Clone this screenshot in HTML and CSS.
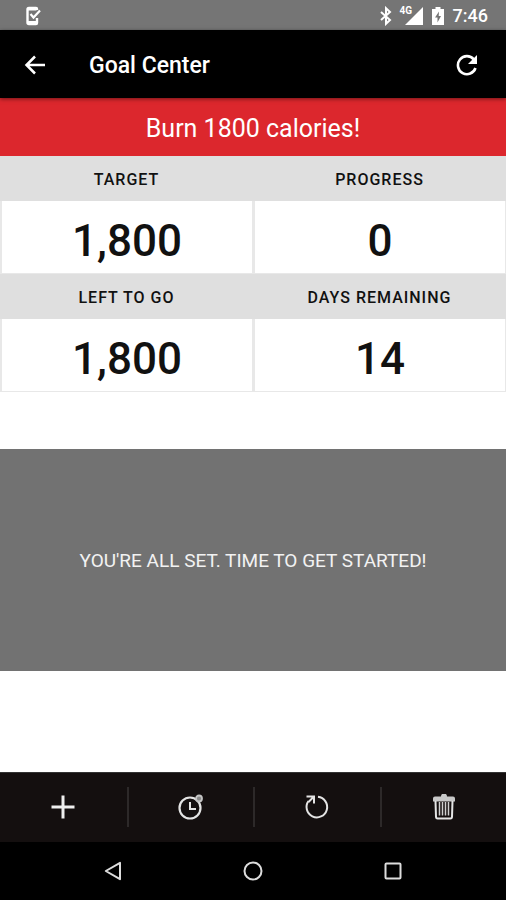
FILE: index.html
```html
<!DOCTYPE html>
<html lang="en">
<head>
<meta charset="utf-8">
<meta name="viewport" content="width=device-width, initial-scale=1">
<title>Goal Center</title>
<link rel="stylesheet" href="styles.css">
</head>
<body>
<div class="screen">
  <div class="status-bar">
    <svg class="status-app" width="16" height="20" viewBox="0 0 16 20" aria-hidden="true">
      <path d="M12 4V3a1 1 0 0 0-1-1H4a1.500 1.500 0 0 0-1.500 1.500v13A1.500 1.500 0 0 0 4 18h7a1 1 0 0 0 1-1v-5" fill="none" stroke="#fff" stroke-width="2.400"/>
      <path d="M2.500 3h9M2.500 16.500h9.500" stroke="#fff" stroke-width="3"/>
      <path d="M5.500 8l3 3.500L15 4.500" fill="none" stroke="#fff" stroke-width="2.200"/>
    </svg>
    <div class="status-info">
      <svg width="12" height="20" viewBox="0 0 12 20" aria-hidden="true">
        <path d="M1 6l9 8-4 3.800V2.200L10 6l-9 8" fill="none" stroke="#fff" stroke-width="2"/>
      </svg>
      <span class="signal">
        <span class="network">4G</span>
        <svg width="18" height="18" viewBox="0 0 18 18" aria-hidden="true"><path d="M18 0v18H0z" fill="#fff"/></svg>
      </span>
      <svg width="12" height="18" viewBox="0 0 12 18" aria-hidden="true">
        <path d="M3.500 0h5v2H12v16H0V2h3.500z" fill="#fff"/>
        <path d="M7 4.500L3 10.500h2.500V15.500L9 9H6.700z" fill="#757575"/>
      </svg>
      <time class="clock">7:46</time>
    </div>
  </div>

  <header class="app-bar">
    <button class="icon-button" type="button" aria-label="Back">
      <svg width="22" height="20" viewBox="0 0 22 20"><path d="M21 10H2.500M11 1.500L2.500 10l8.500 8.500" fill="none" stroke="#fff" stroke-width="2.500"/></svg>
    </button>
    <h1 class="title">Goal Center</h1>
    <button class="icon-button" type="button" aria-label="Refresh">
      <svg width="22" height="22" viewBox="0 0 22 22">
        <path d="M17.800 5.300A9 9 0 1 0 19.500 14" fill="none" stroke="#fff" stroke-width="2.600"/>
        <path d="M21 1v9h-9z" fill="#fff"/>
      </svg>
    </button>
  </header>

  <main class="content">
    <h2 class="goal">Burn 1800 calories!</h2>
    <dl class="stats">
      <div class="stat"><dt>TARGET</dt><dd>1,800</dd></div>
      <div class="stat"><dt>PROGRESS</dt><dd>0</dd></div>
      <div class="stat"><dt>LEFT TO GO</dt><dd>1,800</dd></div>
      <div class="stat"><dt>DAYS REMAINING</dt><dd>14</dd></div>
    </dl>
    <p class="message">YOU'RE ALL SET. TIME TO GET STARTED!</p>
  </main>

  <div class="toolbar">
    <button class="tool" type="button" aria-label="Add goal">
      <svg width="26" height="26" viewBox="0 0 26 26"><path d="M13 1.500v23M1.500 13h23" stroke="#eee" stroke-width="3"/></svg>
    </button>
    <button class="tool" type="button" aria-label="Goal history">
      <svg width="26" height="26" viewBox="0 0 26 26" fill="none" stroke="#e4e4e4">
        <circle cx="12" cy="14" r="10.500" stroke-width="2.200"/>
        <path d="M12 8v7h6" stroke-width="2"/>
        <circle cx="21" cy="4.500" r="3" fill="#888" stroke="#c4c4c4" stroke-width="1.800"/>
      </svg>
    </button>
    <button class="tool" type="button" aria-label="Reset goal">
      <svg width="26" height="26" viewBox="0 0 26 26" fill="none" stroke="#e4e4e4" stroke-width="2">
        <path d="M14 2.800A10.300 10.300 0 1 1 4.500 7"/>
        <path d="M2.500 2.500H10V9.500M9.500 3L4.500 8"/>
      </svg>
    </button>
    <button class="tool" type="button" aria-label="Delete goal">
      <svg width="26" height="26" viewBox="0 0 26 26">
        <path d="M2 4.500a2 2 0 0 1 2-2h6a3 3 0 0 1 6 0h6a2 2 0 0 1 2 2v3H2z" fill="#c8c8c8"/>
        <path d="M4.500 7l.5 16q.2 1.500 1.500 1.500h13q1.300 0 1.500-1.500l.5-16" fill="none" stroke="#e4e4e4" stroke-width="2"/>
        <path d="M8.500 8v13.500M11.500 8v13.500M14.500 8v13.500M17.500 8v13.500" stroke="#d0d0d0" stroke-width="1.500"/>
      </svg>
    </button>
  </div>

  <nav class="system-nav" aria-label="System">
    <button class="nav-button" type="button" aria-label="System back">
      <svg width="20" height="20" viewBox="0 0 20 20"><path d="M17 1.800v16.400L2.800 10z" fill="none" stroke="#ddd" stroke-width="2" stroke-linejoin="round"/></svg>
    </button>
    <button class="nav-button" type="button" aria-label="Home">
      <svg width="20" height="20" viewBox="0 0 20 20"><circle cx="10" cy="10" r="8.500" fill="none" stroke="#ddd" stroke-width="2"/></svg>
    </button>
    <button class="nav-button" type="button" aria-label="Recent apps">
      <svg width="20" height="20" viewBox="0 0 20 20"><rect x="2.500" y="2.500" width="15" height="15" rx="1" fill="none" stroke="#ddd" stroke-width="2"/></svg>
    </button>
  </nav>
</div>
</body>
</html>
```
FILE: styles.css
```css
* {
  box-sizing: border-box;
}

body {
  margin: 0;
  background: #fff;
  color: #111;
  font-family: Roboto, "Liberation Sans", sans-serif;
}

button {
  display: flex;
  align-items: center;
  justify-content: center;
  margin: 0;
  padding: 0;
  border: 0;
  background: none;
}

svg {
  display: block;
  flex: none;
}

.screen {
  display: flex;
  flex-direction: column;
  min-height: 100vh;
}

.status-bar {
  display: flex;
  align-items: center;
  justify-content: space-between;
  height: 30px;
  padding: 1px 18px 0 25px;
  background: #757575;
  color: #fff;
}

.status-info {
  display: flex;
  align-items: center;
  gap: 9px;
}

.signal {
  position: relative;
  padding-left: 4px;
}

.network {
  position: absolute;
  top: -1px;
  left: -1px;
  font-size: 10px;
  line-height: 10px;
  font-weight: 700;
}

.clock {
  font-size: 18px;
  line-height: 28px;
  font-weight: 500;
}

.app-bar {
  position: relative;
  display: flex;
  align-items: center;
  height: 68px;
  padding: 1px 16px 0 12px;
  background: #000;
  color: #fff;
  box-shadow: 0 1px 4px rgba(0, 0, 0, 0.5);
}

.icon-button {
  width: 46px;
  height: 46px;
}

.title {
  flex: 1;
  margin: 0;
  padding: 2px 0 0 31px;
  font-size: 23px;
  line-height: 32px;
  font-weight: 500;
}

.content {
  flex: 1;
}

.goal {
  margin: 0;
  padding: 15px 16px 11px;
  background: #dc272d;
  color: #fff;
  font-size: 25px;
  line-height: 32px;
  font-weight: 400;
  text-align: center;
}

.stats {
  display: grid;
  grid-template-columns: 1fr 1fr;
  margin: 0;
  text-align: center;
}

.stat dt {
  padding: 13px 0 11px;
  background: #dfdfdf;
  font-size: 16px;
  line-height: 21px;
  font-weight: 500;
  letter-spacing: 1px;
}

.stat dd {
  margin: 0;
  padding: 16px 0 8px;
  border: 1px solid #e8e8e8;
  border-top: 0;
  border-left-width: 2px;
  font-size: 44px;
  line-height: 48px;
  font-weight: 500;
}

.message {
  margin: 57px 0 0;
  padding: 96px 16px 94px;
  background: #727272;
  color: #f2f2f2;
  font-size: 19px;
  line-height: 32px;
  text-align: center;
}

.toolbar {
  display: grid;
  grid-template-columns: repeat(4, 1fr);
  height: 70px;
  padding: 14px 0 15px;
  border-top: 1px solid #333;
  background: #140f0f;
}

.tool + .tool {
  border-left: 2px solid #2d2929;
}

.system-nav {
  display: flex;
  align-items: center;
  justify-content: center;
  gap: 92px;
  height: 58px;
  background: #000;
}

.nav-button {
  width: 48px;
  height: 48px;
}
```
